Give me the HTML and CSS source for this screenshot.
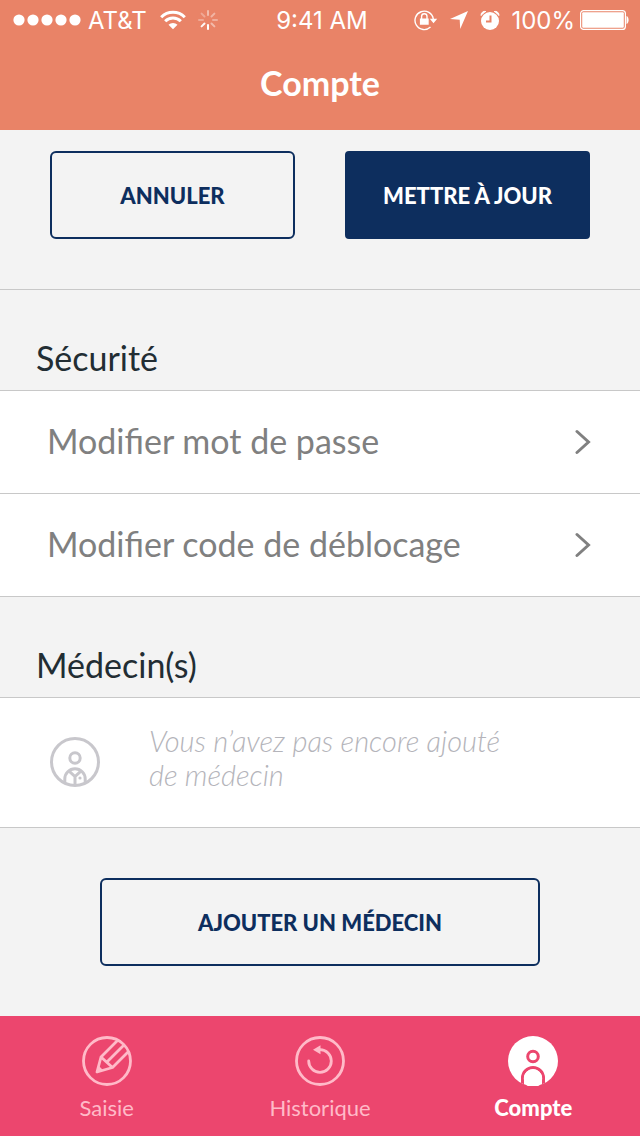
FILE: index.html
```html
<!DOCTYPE html>
<html lang="fr">
<head>
<meta charset="utf-8">
<meta name="viewport" content="width=device-width, initial-scale=1">
<title>Compte</title>
<link rel="stylesheet" href="styles.css">
</head>
<body>
<div class="app">
  <header class="header">
    <div class="status">
      <div class="status-left">
        <svg class="signal" width="68" height="12" viewBox="0 0 68 12" fill="#fff" aria-hidden="true"><circle cx="6" cy="6" r="5.6"/><circle cx="20" cy="6" r="5.6"/><circle cx="34" cy="6" r="5.6"/><circle cx="48" cy="6" r="5.6"/><circle cx="62" cy="6" r="5.6"/></svg>
        <span class="carrier">AT&amp;T</span>
        <svg class="wifi" width="26" height="20" viewBox="0 0 26 20" fill="none" stroke="#fff" stroke-width="3" aria-hidden="true"><path d="M1.2 7.2a16.7 16.7 0 0 1 23.6 0M5.2 11.3a11 11 0 0 1 15.6 0"/><path fill="#fff" stroke="none" d="M13 19.2 8.5 14.8a6.4 6.4 0 0 1 9 0z"/></svg>
        <svg class="spinner" width="20" height="20" viewBox="0 0 20 20" stroke="#fff" stroke-width="2" stroke-linecap="round" aria-hidden="true"><path opacity=".45" d="M10 1v4"/><path opacity=".4" d="m16.4 3.6-2.9 2.9"/><path opacity=".35" d="M19 10h-4"/><path opacity=".45" d="m16.4 16.4-2.9-2.9"/><path d="M10 19v-4"/><path opacity=".95" d="m3.6 16.4 2.9-2.9"/><path opacity=".3" d="M1 10h4"/><path opacity=".3" d="m3.6 3.6 2.9 2.9"/></svg>
      </div>
      <time class="clock">9:41 AM</time>
      <div class="status-right">
        <svg class="lock" width="24" height="22" viewBox="0 0 24 22" fill="none" stroke="#fff" stroke-width="1.4" aria-hidden="true"><path d="M16.5 18.1A9.2 9.2 0 1 1 19.3 10"/><path fill="#fff" stroke="none" d="M15.8 9.8h7.4l-3.7 4.4zM5.9 9.5h8.8v6.3H5.9z"/><path d="M7.6 10V7.4a2.7 2.7 0 0 1 5.4 0V10"/></svg>
        <svg class="location" width="18" height="18" viewBox="0 0 18 18" fill="#fff" aria-hidden="true"><path d="M18 0 10.2 18 9.7 8.8 0 8z"/></svg>
        <svg class="alarm" width="20" height="20" viewBox="0 0 20 20" aria-hidden="true"><circle cx="10" cy="11" r="9" fill="#fff"/><path d="M1.1 5.8A3.7 3.7 0 0 1 6 1.6M18.9 5.8A3.7 3.7 0 0 0 14 1.6" fill="#fff" stroke="#fff"/><path d="M10.5 5.5v6H6" fill="none" stroke="#e98367" stroke-width="2"/></svg>
        <span class="percent">100%</span>
        <svg class="battery" width="49" height="20" viewBox="0 0 49 20" fill="#fff" aria-hidden="true"><rect x=".6" y=".6" width="44.8" height="18.8" rx="3" fill="none" stroke="#fff" stroke-width="1.2"/><rect x="2.2" y="2.2" width="41.6" height="15.6" rx="1"/><path d="M46.5 6c2.8.8 2.8 7.2 0 8z"/></svg>
      </div>
    </div>
    <h1 class="title">Compte</h1>
  </header>

  <main class="content">
    <div class="actions">
      <button class="btn" type="button">ANNULER</button>
      <button class="btn btn-primary" type="button">METTRE À JOUR</button>
    </div>

    <section class="group">
      <h2 class="group-title">Sécurité</h2>
      <ul class="list">
        <li class="item"><a class="row" href="#mot-de-passe"><span class="row-label">Modifier mot de passe</span><svg width="16" height="26" viewBox="0 0 16 26" fill="none" stroke="#808080" stroke-width="3" stroke-linecap="round" aria-hidden="true"><path d="M2 2.5 13.5 13 2 23.5"/></svg></a></li>
        <li class="item"><a class="row" href="#code"><span class="row-label">Modifier code de déblocage</span><svg width="16" height="26" viewBox="0 0 16 26" fill="none" stroke="#808080" stroke-width="3" stroke-linecap="round" aria-hidden="true"><path d="M2 2.5 13.5 13 2 23.5"/></svg></a></li>
      </ul>
    </section>

    <section class="group">
      <h2 class="group-title">Médecin(s)</h2>
      <div class="empty">
        <svg class="doctor" width="50" height="50" viewBox="0 0 50 50" fill="none" stroke="#c8c7cc" stroke-width="3" aria-hidden="true"><circle cx="25" cy="25" r="23.5"/><circle cx="25" cy="21" r="5.2"/><path d="M14.8 46V42a10.2 10.2 0 0 1 20.4 0v4M18.8 33.8l6.2 5.7 6.2-5.7M25 39v10"/><circle cx="30" cy="41" r="1.6" fill="#c8c7cc" stroke="none"/></svg>
        <p class="empty-text">Vous n’avez pas encore ajouté de médecin</p>
      </div>
    </section>

    <div class="add">
      <button class="btn" type="button">AJOUTER UN MÉDECIN</button>
    </div>
  </main>

  <nav class="tabs">
    <a class="tab" href="#saisie">
      <svg width="50" height="50" viewBox="0 0 50 50" fill="none" stroke="currentColor" stroke-width="2.8" stroke-linejoin="round" aria-hidden="true"><circle cx="25" cy="25" r="23.5"/><path d="M35.5 4.5 19 21 15 36l15.5-4.5L47 15M19 21 30.5 31.5M24.7 26.2 42 8.9"/><path fill="currentColor" stroke="none" d="m16.4 29.5 5.1 5L14 37z"/></svg>
      <span>Saisie</span>
    </a>
    <a class="tab" href="#historique">
      <svg width="50" height="50" viewBox="0 0 50 50" fill="none" stroke="currentColor" stroke-width="2.8" stroke-linecap="round" aria-hidden="true"><circle cx="25" cy="25" r="23.5"/><path d="M13.7 25a11.3 11.3 0 1 0 11.3-11.3"/><path fill="currentColor" stroke="none" d="M18 13.8 25.5 9.3v9z"/></svg>
      <span>Historique</span>
    </a>
    <a class="tab tab-active" href="#compte" aria-current="page">
      <svg width="50" height="50" viewBox="0 0 50 50" aria-hidden="true"><defs><clipPath id="disc"><circle cx="25" cy="25" r="25"/></clipPath></defs><g clip-path="url(#disc)"><path fill="currentColor" d="M0 0h50v50H0z"/><g fill="none" stroke="#ec466e" stroke-width="3"><circle cx="25" cy="20.5" r="5.3"/><path d="M14.5 50v-8a10.5 10.5 0 0 1 21 0v8"/></g></g><path fill="currentColor" d="M17 47a9.2 9.2 0 1 1 16 0q-1 3-3 3H20q-2 0-3-3z"/></svg>
      <span>Compte</span>
    </a>
  </nav>
</div>
</body>
</html>
```
FILE: styles.css
```css
* { box-sizing: border-box; }

body {
  margin: 0;
  background: #f3f3f3;
  color: #222d33;
  font-family: Lato, "Liberation Sans", sans-serif;
}

h1, h2, p, ul { margin: 0; padding: 0; font-weight: 400; }

.app {
  display: flex;
  flex-direction: column;
  min-height: 100vh;
}

.header {
  padding-bottom: 24px;
  background: #e98367;
  color: #fff;
}

.status {
  display: grid;
  grid-template-columns: 1fr auto 1fr;
  align-items: center;
  height: 40px;
  padding: 0 11px 0 13px;
  font-family: Inter, Roboto, sans-serif;
  font-size: 24px;
  line-height: 38px;
}

.status-left, .status-right { display: flex; align-items: center; }
.status-right { justify-content: flex-end; }
.carrier, .clock, .percent { padding-top: 2px; }
.clock { padding-left: 2px; }
.carrier { margin: 0 13px 0 7px; }
.spinner { margin-left: 12px; }
.location { margin: 0 12px; }
.percent { margin: 0 5px 0 11px; }

.title {
  padding-top: 20px;
  font-size: 34px;
  font-weight: 700;
  line-height: 46px;
  text-align: center;
}

.content { flex: 1; }

.actions {
  display: flex;
  gap: 50px;
  padding: 21px 50px 50px;
  border-bottom: 1px solid #c8c8c8;
}

.btn {
  flex: 1;
  height: 88px;
  padding: 0;
  border: 2px solid #0d2e5e;
  border-radius: 6px;
  background: transparent;
  color: #0d2e5e;
  font-family: inherit;
  font-size: 22px;
  font-weight: 900;
}

.btn-primary {
  border-radius: 4px;
  background: #0d2e5e;
  color: #fff;
}

.group-title {
  padding: 46px 36px 10px;
  font-size: 34px;
  line-height: 44px;
}

.list {
  border-top: 1px solid #c8c8c8;
  background: #fff;
  list-style: none;
}

.item { border-bottom: 1px solid #c8c8c8; }

.row {
  display: flex;
  align-items: center;
  justify-content: space-between;
  height: 102px;
  padding: 0 49px 0 47px;
  color: #808080;
  font-size: 34px;
  line-height: 44px;
  text-decoration: none;
}

.row-label { padding-bottom: 2px; }

.empty {
  display: flex;
  align-items: center;
  gap: 49px;
  padding: 26px 50px 27px;
  border: solid #c8c8c8;
  border-width: 1px 0;
  background: #fff;
}

.doctor { flex: none; }

.empty-text {
  max-width: 370px;
  padding-bottom: 8px;
  color: #b4b4ba;
  font-size: 29px;
  font-style: italic;
  font-weight: 300;
  line-height: 34px;
}

.add {
  display: flex;
  padding: 50px 100px;
}

.tabs {
  display: grid;
  grid-template-columns: repeat(3, 1fr);
  background: #ec466e;
}

.tab {
  display: flex;
  flex-direction: column;
  align-items: center;
  gap: 8px;
  padding: 20px 0 14px;
  color: #ffbac8;
  font-size: 22px;
  line-height: 28px;
  text-decoration: none;
}

.tab-active { color: #fff; font-weight: 900; }
```
